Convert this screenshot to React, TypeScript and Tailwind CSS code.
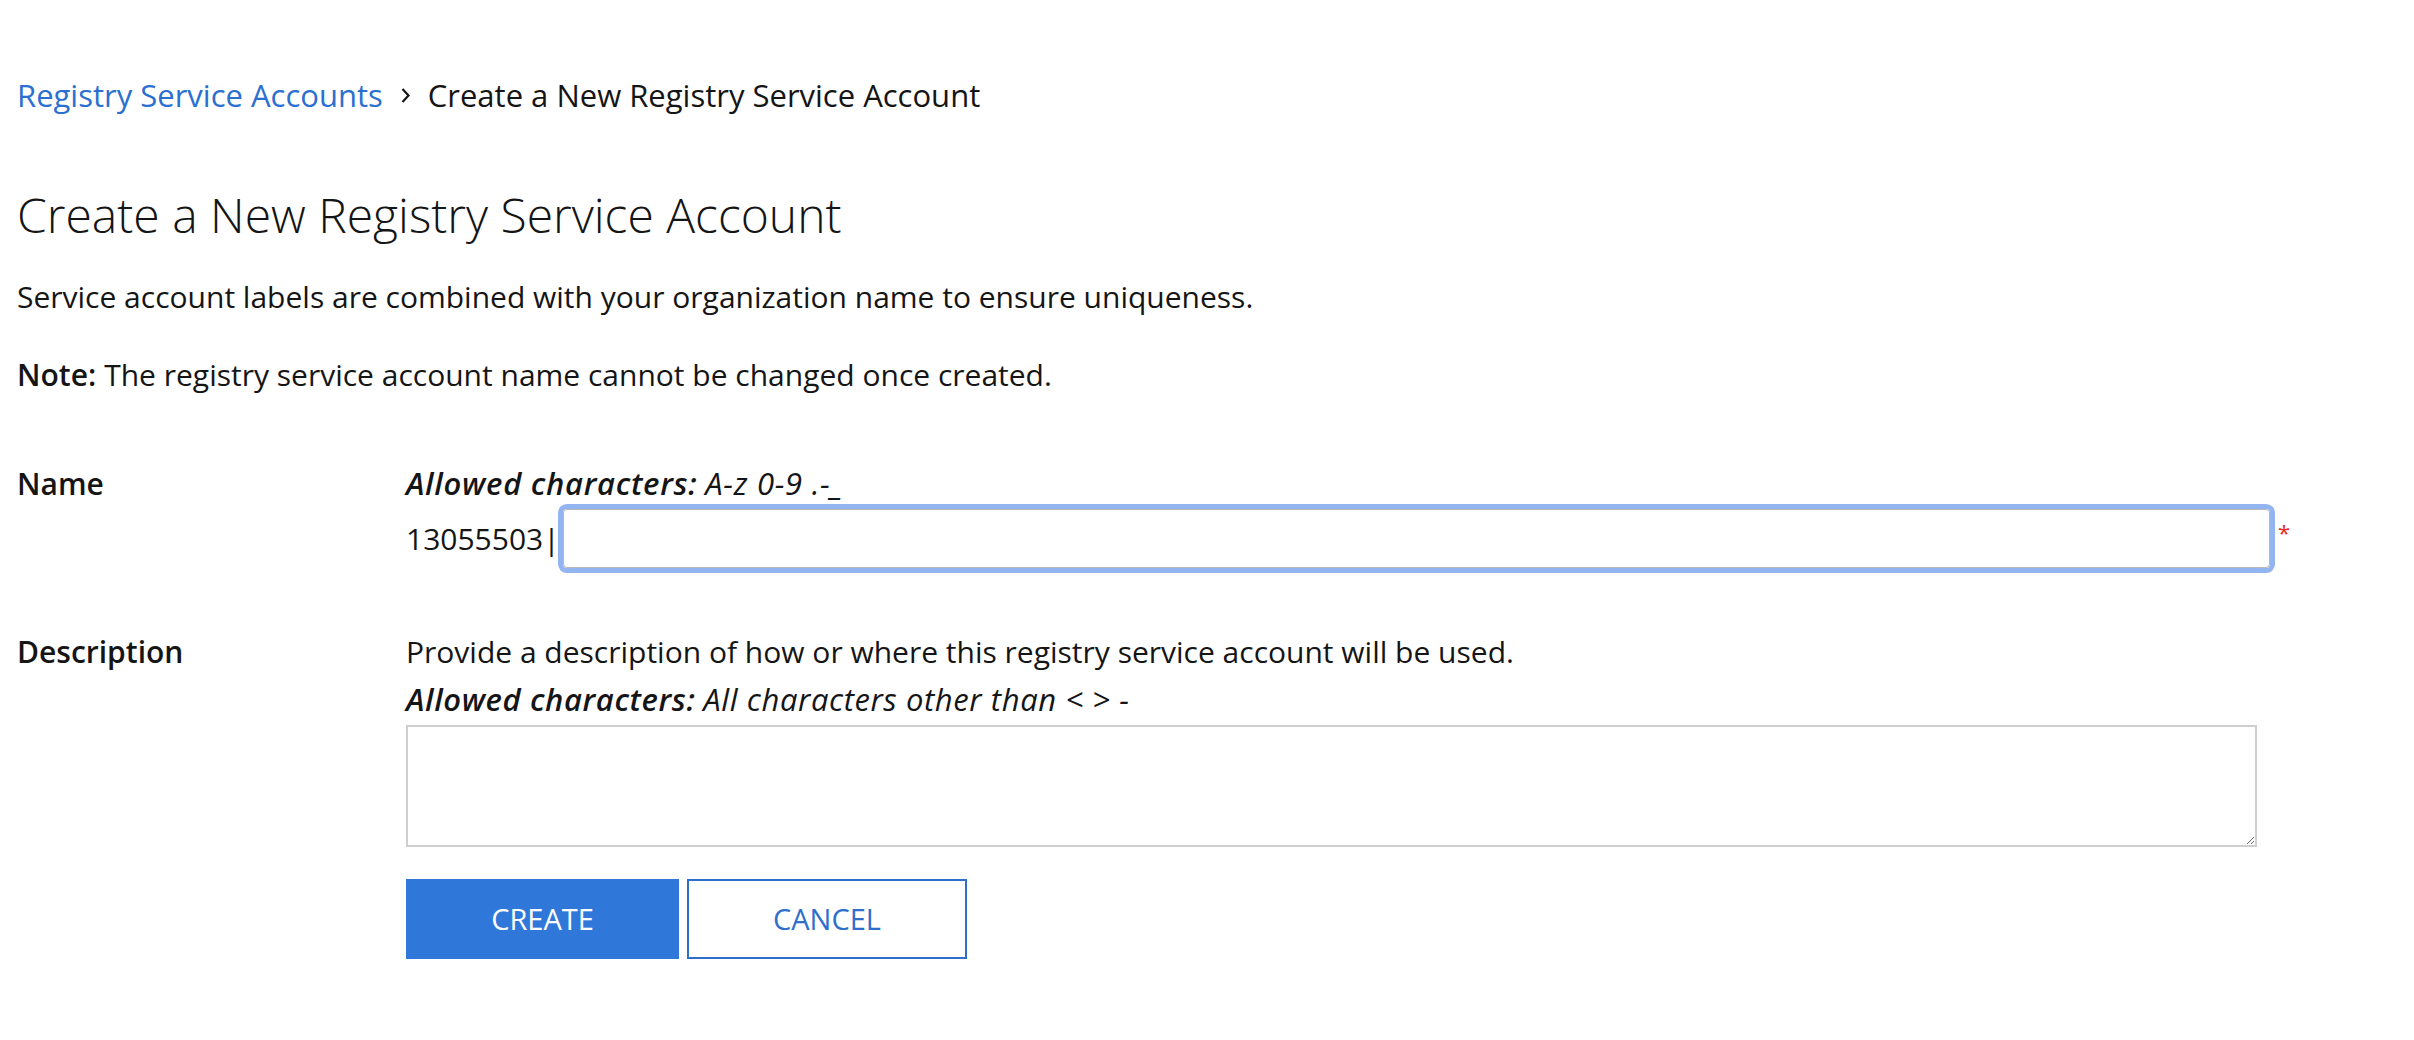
import React from "react";

export default function App() {
  return (
    <div
      className="min-h-[1040px] bg-white px-[17px] pt-[75px] text-[#151515]"
      style={{ fontFamily: '"Open Sans", "Noto Sans", sans-serif' }}
    >
      <nav className="flex h-[40px] items-center text-[31px]">
        <a className="text-[#2b6fd0]" href="#">Registry Service Accounts</a>
        <svg className="mx-[17px]" width="11" height="17" viewBox="0 0 11 17" fill="none">
          <path d="M2.5 2 L8.5 8.5 L2.5 15" stroke="#151515" strokeWidth="2.2" />
        </svg>
        <span>Create a New Registry Service Account</span>
      </nav>

      <h1 className="mt-[70px] flex h-[60px] items-center text-[48px] font-light">
        Create a New Registry Service Account
      </h1>

      <p className="mt-[31px] flex h-[40px] items-center text-[30px]">
        Service account labels are combined with your organization name to ensure uniqueness.
      </p>
      <p className="mt-[38px] flex h-[40px] items-center text-[30px]">
        <span className="mr-[8px] font-semibold">Note:</span>
        The registry service account name cannot be changed once created.
      </p>

      <div className="mt-[69px] flex text-[30px]">
        <div className="flex h-[40px] w-[389px] items-center font-semibold">Name</div>
        <div className="flex w-[1884px] flex-col">
          <div className="flex h-[40px] items-center text-[31px] italic tracking-[0.7px]">
            <span className="mr-[8px] font-semibold">Allowed characters:</span>
            <span>A-z 0-9 .-_</span>
          </div>
          <div className="flex h-[70px] items-center">
            <span>13055503|</span>
            <div className="ml-[3px] h-[59px] flex-1 rounded-[4px] border border-[#b8b8b8] ring-[5px] ring-[#92b5f2]" />
            <span className="ml-[8px] self-start pt-[18px] text-[22px] leading-none text-[#e8271d]">*</span>
          </div>
        </div>
      </div>

      <div className="mt-[58px] flex text-[30px]">
        <div className="flex h-[40px] w-[389px] items-center font-semibold">Description</div>
        <div className="flex flex-col">
          <div className="flex h-[40px] items-center">
            Provide a description of how or where this registry service account will be used.
          </div>
          <div className="mt-[8px] flex h-[40px] items-center text-[31px] italic tracking-[0.6px]">
            <span className="mr-[8px] font-semibold">Allowed characters:</span>
            <span>All characters other than &lt; &gt; -</span>
          </div>
          <textarea
            readOnly
            className="mt-[6px] h-[122px] w-[1851px] border-2 border-[#cfcfcf] bg-white outline-none"
          />
          <div className="mt-[32px] flex gap-[8px]">
            <button className="flex h-[80px] w-[273px] items-center justify-center bg-[#2f77d8] text-[29px] font-medium text-white">
              CREATE
            </button>
            <button className="flex h-[80px] w-[280px] items-center justify-center border-2 border-[#2f6fcc] bg-white text-[29px] font-medium text-[#2f6fcc]">
              CANCEL
            </button>
          </div>
        </div>
      </div>
    </div>
  );
}
